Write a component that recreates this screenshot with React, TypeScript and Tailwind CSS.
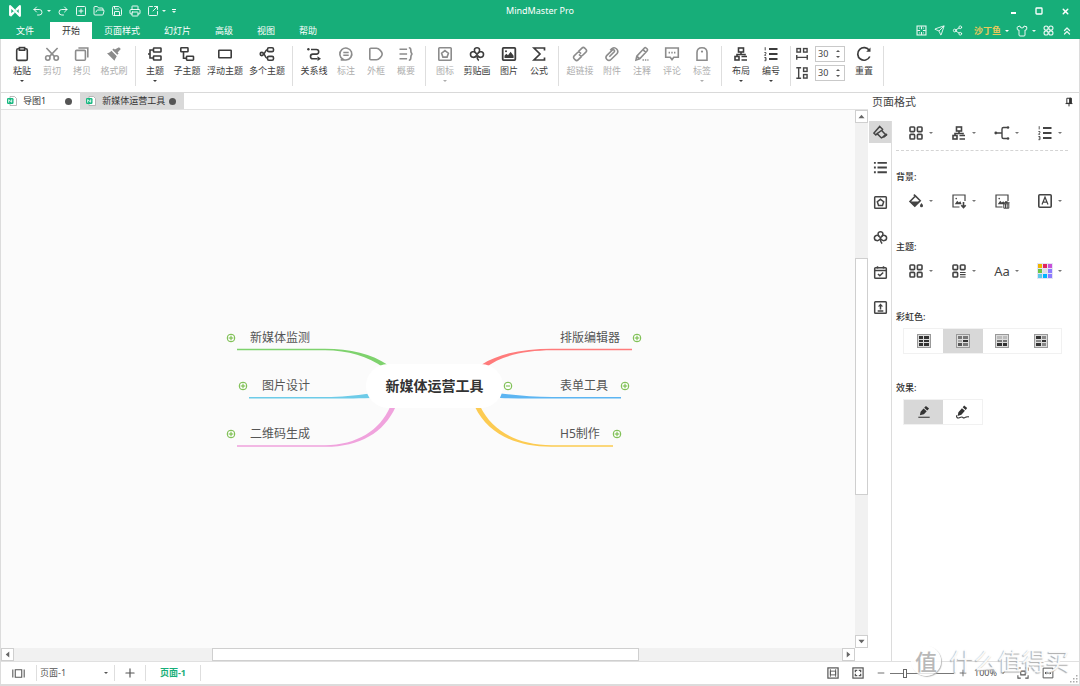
import { useState, type ReactNode } from "react"
import {
  ChevronsUp,
  FolderOpen,
  Minus,
  Plus,
  Printer,
  Redo2,
  Save,
  Send,
  Share2,
  Shirt,
  Square,
  SquareArrowOutUpRight,
  SquarePlus,
  Undo2,
  X,
} from "lucide-react"
import clsx from "clsx"

/* ---------- icons, all on a 16x16 grid ---------- */

const tree = (
  <>
    <rect x="5.5" y="2" width="5" height="4" />
    <path d="M8 6v2.5M4 10.5v-2h8v1" />
    <rect x="2" y="10.5" width="4" height="3.5" />
    <path d="M8.5 10.5H14M8.5 14H14" />
  </>
)

const numbered = (
  <>
    <path d="M6 3h8.5M6 8h8.5M6 13h8.5" strokeWidth="2" />
    <path d="M2.2 1.2v3.2M1.4 6.5h1.5v1.3L1.5 9.3h1.6M1.4 11.5h1.6v3.2H1.4M1.8 13h1.2" strokeWidth="0.9" />
  </>
)

const clover = (
  <>
    <path d="M7 7.2C4.6 5.6 4.8 1.8 8 1.8s3.400 3.800 1 5.400" />
    <path d="M7 7.200C5.200 4.600 1.300 5.600 1.500 8.700s4.500 3.600 6 .8" />
    <path d="M9 7.200c1.800-2.600 5.700-1.600 5.500 1.500s-4.500 3.600-6 .8" />
    <path d="M8 8v2.500c0 2 .5 3 1.800 4M7 7.200l1 1.200 1-1.200" />
  </>
)

const badge = (
  <>
    <rect x="1.8" y="1.8" width="12.4" height="12.4" rx="0.8" />
    <path d="M8 4.6l3.4 2.6-1.3 3.9H5.9L4.6 7.2z" />
  </>
)

const boxes = (
  <>
    <rect x="2" y="2" width="4.6" height="4.6" rx="0.8" />
    <rect x="9.4" y="2" width="4.6" height="4.6" rx="0.8" />
    <rect x="2" y="9.4" width="4.6" height="4.6" rx="0.8" />
    <rect x="9.4" y="9.4" width="4.6" height="4.6" rx="0.8" />
  </>
)

const picture = (
  <>
    <path d="M14 8V2H2v12h6.5" strokeWidth="1.2" />
    <path d="M3.8 11.2l2.4-3.4 1.6 1.8 1.6-1.4 1.2 3z" fill="currentColor" stroke="none" />
    <circle cx="5.2" cy="5.6" r="0.8" fill="currentColor" stroke="none" />
  </>
)

const ICONS: Record<string, ReactNode> = {
  paste: (
    <>
      <rect x="2.7" y="2.8" width="10.6" height="11.6" rx="1.4" />
      <rect x="5.4" y="1.6" width="5.2" height="2.6" fill="white" />
    </>
  ),
  cut: (
    <>
      <circle cx="3.8" cy="12" r="2.2" />
      <circle cx="12.2" cy="12" r="2.2" />
      <path d="M2.4 2l8.2 8.6M13.6 2L5.4 10.6" />
    </>
  ),
  copy: (
    <>
      <rect x="1.6" y="4.4" width="9.8" height="9.8" rx="1" />
      <path d="M4.4 2h9.4v9.6" />
    </>
  ),
  brush: (
    <g fill="currentColor" stroke="none">
      <path d="M13 1.2l1.8 1.8-3.2 3.4 1 1-1.3 1.4-5-5 1.4-1.3 1.2 1.1z" />
      <path d="M5.4 4.8l5.4 5.4c-1 1.4-1.8 2.8-2.3 4.6L1 7.3c1.8-.3 3.2-1 4.4-2.5z" />
    </g>
  ),
  topic: (
    <>
      <rect x="6.5" y="2" width="7.5" height="4" rx="0.6" />
      <rect x="6.5" y="10" width="7.5" height="4" rx="0.6" />
      <path d="M6.5 4H3v8h3.5M3 8H1" />
    </>
  ),
  subtopic: (
    <>
      <rect x="1.8" y="1.8" width="7.2" height="4" rx="0.6" />
      <rect x="7.5" y="10.2" width="7" height="4" rx="0.6" />
      <path d="M4.5 5.8v6.4h3" />
    </>
  ),
  floating: <rect x="1.8" y="4.2" width="12.4" height="7.6" rx="0.5" />,
  multi: (
    <>
      <circle cx="2.8" cy="8" r="1.6" />
      <rect x="8.5" y="1.8" width="6" height="3.8" rx="1.4" />
      <rect x="8.5" y="10.4" width="6" height="3.8" rx="1.4" />
      <path d="M8.500 3.700C5.800 3.700 6.500 8 4.400 8M8.500 12.300C5.800 12.300 6.500 8 4.400 8" />
    </>
  ),
  relation: (
    <>
      <path d="M5 3.500h5.400a2.300 2.300 0 0 1 0 4.600H6.800a2.300 2.300 0 0 0 0 4.600h4.700" />
      <circle cx="2.4" cy="3.2" r="1.2" fill="currentColor" stroke="none" />
      <path d="M11.500 10.300l3.500 2.400-3.500 2.400z" fill="currentColor" stroke="none" />
    </>
  ),
  callout: (
    <>
      <path d="M5 13.300a6 6 0 1 1 3 .7H2.800z" />
      <path d="M5.300 6.500h5.400M5.300 9.300h5.400" />
    </>
  ),
  boundary: <path d="M2.800 2.200h5.700c2.500 0 5.700 3.800 5.700 5.800s-3.200 5.800-5.700 5.800H2.800a1 1 0 0 1-1-1V3.200a1 1 0 0 1 1-1z" />,
  summary: (
    <path d="M1.500 3.200h7.600M1.500 8h7.600M1.500 12.800h7.600M10.800 1.800c2 0 2 .8 2 2.200 0 2 0 3.600 1.600 4-1.600.4-1.600 2-1.600 4 0 1.400 0 2.200-2 2.200" />
  ),
  badge,
  clover,
  image: (
    <>
      <rect x="1.7" y="1.9" width="12.6" height="12.2" rx="0.8" strokeWidth="1.8" />
      <path d="M3.500 12V9.800l1.800-2 1.700 1.500 2.600-3.500 3 4V12z" fill="currentColor" stroke="none" />
      <circle cx="5" cy="5.2" r="1" fill="currentColor" stroke="none" />
    </>
  ),
  sigma: <path d="M13.500 4.500V2H3l6 6-6 6h10.500v-2.500" strokeWidth="1.7" />,
  link: (
    <g transform="rotate(-45 8 8)">
      <path d="M7.500 10.800H2.500a2 2 0 0 1-2-2V7.200a2 2 0 0 1 2-2h4.500a2 2 0 0 1 2 2v1.300" />
      <path d="M8.500 5.200h5a2 2 0 0 1 2 2v1.600a2 2 0 0 1-2 2H9a2 2 0 0 1-2-2V7.500" />
    </g>
  ),
  clip: (
    <path d="M5.300 10.700l5-5a1.300 1.300 0 0 0-1.800-1.800l-5.600 5.500a2.900 2.900 0 0 0 4.100 4.100l5.900-5.800a3.600 3.600 0 0 0-5-5.100L6.200 4.300" />
  ),
  note: (
    <>
      <path d="M2 14l.8-3.800L10.400 2a1.200 1.200 0 0 1 1.700 0l1.100 1a1.200 1.200 0 0 1 0 1.700L5.700 12.800zM9 3.600l2.800 2.800M2.800 10.200l2.900 2.600" />
      <path d="M8.500 14h6" strokeDasharray="1.4 1" />
    </>
  ),
  comment: (
    <>
      <path d="M1.700 2h12.600v9.200h-4.500L8 13.600l-1.800-2.400H1.700z" />
      <path d="M4.600 6.600h1.400M7.300 6.600h1.400M10 6.600h1.400" />
    </>
  ),
  tag: (
    <>
      <path d="M3 14.200V6.500C3 3.500 5.200 1.700 8 1.700s5 1.800 5 4.800v7.700z" />
      <circle cx="8" cy="5.600" r="1.100" fill="currentColor" stroke="none" />
    </>
  ),
  tree,
  numbered,
  reset: (
    <>
      <path d="M13.800 10.500A6.300 6.300 0 1 1 13.400 4.600" strokeWidth="1.7" />
      <path d="M14.500 1.500v4.300h-4.300z" fill="currentColor" stroke="none" />
    </>
  ),
  spaceX: (
    <>
      <rect x="2.200" y="1.800" width="4" height="4" />
      <rect x="9.800" y="1.800" width="4" height="4" />
      <path d="M2 9v5.500M14 9v5.500M2 11.800h12" />
    </>
  ),
  spaceY: (
    <>
      <path d="M1.500 2h5.500M1.500 14h5.500M4.200 2v12" />
      <rect x="9.800" y="2.200" width="4" height="4" />
      <rect x="9.800" y="9.800" width="4" height="4" />
    </>
  ),
  boxes,
  boxesList: (
    <>
      <rect x="2" y="2" width="4.600" height="4.600" rx="0.800" />
      <rect x="9.400" y="2" width="4.600" height="4.600" rx="0.800" />
      <rect x="2" y="9.400" width="4.600" height="4.600" rx="0.800" />
      <path d="M9 9.500h5.600M9 11.700h5.600M9 14h5.600" strokeWidth="1.200" />
    </>
  ),
  branch: (
    <>
      <path d="M3 8h5M13 2.500h-3.500a1.500 1.500 0 0 0-1.500 1.500v8a1.500 1.500 0 0 0 1.500 1.500H13" strokeWidth="1.400" />
      <g fill="currentColor" stroke="none">
        <circle cx="1.800" cy="8" r="1.400" />
        <circle cx="14" cy="2.500" r="1.300" />
        <circle cx="14" cy="13.500" r="1.300" />
      </g>
    </>
  ),
  bucket: (
    <>
      <path d="M7.400 3L2 8.400l4.800 4.800 5.400-5.400zM5.800 1.600l1.600 1.400" />
      <path d="M2 8.400h9.800l-5 5z" fill="currentColor" stroke="none" />
      <path d="M13.500 10c1 1.400 1.500 2 1.500 2.800a1.500 1.500 0 0 1-3 0c0-.8.500-1.400 1.500-2.800z" fill="currentColor" stroke="none" />
    </>
  ),
  pictureDown: (
    <>
      {picture}
      <path d="M12.500 9v5M10.300 12.200l2.200 2.400 2.200-2.400" strokeWidth="1.600" />
    </>
  ),
  pictureTrash: (
    <>
      {picture}
      <path d="M9 9.800h6.600M11 8.800h2.600" strokeWidth="1.300" />
      <path d="M9.800 10.800h5v4.400h-5zM11.500 11v4M13.200 11v4" strokeWidth="1" />
    </>
  ),
  letter: (
    <>
      <rect x="1.800" y="1.800" width="12.400" height="12.400" rx="1" />
      <path d="M5 11.500l3-7.300 3 7.300M6 9.200h4" strokeWidth="1.200" />
    </>
  ),
  painter: (
    <>
      <path d="M7.200 1.500l3 3-1 1.300 4.800 5c-1.600 1.200-3 2-5 3L4.400 9.200 3 10.600 1 8.600z" />
      <path d="M4.400 9.200l5-3.600" />
      <path d="M11 12.800l3.800-3.200" strokeWidth="2.400" />
    </>
  ),
  list: (
    <>
      <path d="M4.800 3h10M4.800 8h10M4.800 13h10" strokeWidth="2" />
      <path d="M1 3h2M1 8h2M1 13h2" strokeWidth="2" />
    </>
  ),
  calendar: (
    <>
      <rect x="1.800" y="2.800" width="12.400" height="11.400" rx="1" />
      <path d="M2 5.800h12M4.800 1.200v2.400M11.200 1.200v2.400M5.300 9.500l2 2 3.600-3.600" />
    </>
  ),
  upload: (
    <>
      <rect x="1.800" y="1.800" width="12.400" height="12.400" rx="0.800" />
      <path d="M5 11.600h6M8 10V6" />
      <path d="M8 3.600l2.800 3.400H5.200z" fill="currentColor" stroke="none" />
    </>
  ),
  marker: (
    <>
      <path d="M10.200 1l3.600 3-2 2.200-3.600-3zM7.500 4l3.600 3-3.200 3.500-4.600 1.200.8-4z" fill="currentColor" stroke="none" />
      <path d="M1.500 14h13" strokeWidth="1.200" />
    </>
  ),
  scribble: (
    <>
      <path d="M9.800.5l3.200 2.800-1.600 1.900-3.200-2.800zM7.400 3.400l3.200 2.800-3.800 4.200-4 1.400.8-4z" fill="currentColor" stroke="none" />
      <path d="M2 11c-1 2 .5 3.400 2.500 2.600s3-1.400 3.800-.4 1.800.8 2.600 0 2.400-.6 4-.6" strokeWidth="1.200" />
    </>
  ),
  pages: <path d="M1 3v10M15 3v10M4 3.500h8v9H4z" strokeWidth="1.300" />,
  fitPage: (
    <>
      <rect x="1.200" y="1.200" width="13.600" height="13.600" />
      <path d="M4.500 3v10M11.500 3v10M4.500 5.500h7v5h-7z" strokeWidth="1.200" />
    </>
  ),
  expand: (
    <>
      <rect x="1.200" y="1.200" width="13.600" height="13.600" />
      <path d="M4.500 7V4.500H7M9 4.500h2.500V7M11.500 9v2.500H9M7 11.500H4.500V9" strokeWidth="1.800" />
    </>
  ),
  focus: <path d="M1.200 5V1.200H5M11 1.200h3.800V5M14.800 11v3.800H11M5 14.800H1.200V11M5 5.500h6v5H5z" strokeWidth="1.400" />,
  fitWidth: (
    <path d="M1.500 14.500v-13h13v13zM4 8h8M5.500 6.500L4 8l1.500 1.500M10.500 6.500L12 8l-1.500 1.500" strokeWidth="1.300" />
  ),
  pin: (
    <>
      <path d="M4.500 2h7v8h-7zM2.500 10.500h11M8 10.500V15" />
      <path d="M9 2h2.500v8H9z" fill="currentColor" />
    </>
  ),
  logo: <path d="M2.500 13.500v-11l11 11v-11L9.200 7M7 9.200l-4.500 4.300" strokeWidth="2.600" strokeLinejoin="round" />,
  fullscreen: (
    <>
      <rect x="1.500" y="1.500" width="13" height="13" />
      <path d="M8 2v4M8 10v4M2 8h4M10 8h4" />
      <path d="M4.500 4.500h1M10.500 4.500h1M4.500 11.500h1M10.500 11.500h1" />
    </>
  ),
  rings: (
    <>
      <circle cx="4.500" cy="4.500" r="3" />
      <circle cx="11.500" cy="4.500" r="3" />
      <circle cx="4.500" cy="11.500" r="3" />
      <circle cx="11.500" cy="11.500" r="3" />
    </>
  ),
}

function Icon({ name, className = "size-4" }: { name: string; className?: string }) {
  return (
    <svg viewBox="0 0 16 16" fill="none" stroke="currentColor" strokeWidth="1.6" className={clsx("shrink-0", className)} aria-hidden>
      {ICONS[name]}
    </svg>
  )
}

function Caret({ className }: { className?: string }) {
  return (
    <svg viewBox="0 0 4 2" className={clsx("h-0.5 w-1 shrink-0", className)} fill="currentColor" aria-hidden>
      <path d="M0 0h4L2 2z" />
    </svg>
  )
}

/* ---------- title bar and menu ---------- */

const MENU = ["页面样式", "幻灯片", "高级", "视图", "帮助"]

function Header() {
  return (
    <header className="bg-[#17ae79] text-white">
      <div className="grid h-[22px] grid-cols-[1fr_auto_1fr] items-center">
        <div className="flex items-center gap-[6px] pl-2 text-white/90">
          <Icon name="logo" className="size-[14px] text-white" />
          <div className="ml-1 flex items-center gap-[3px]">
            <button aria-label="撤销"><Undo2 className="size-3" /></button>
            <Caret />
          </div>
          <button aria-label="重做"><Redo2 className="size-3" /></button>
          <button aria-label="新建"><SquarePlus className="size-3" /></button>
          <button aria-label="打开"><FolderOpen className="size-3" /></button>
          <button aria-label="保存"><Save className="size-3" /></button>
          <button aria-label="打印"><Printer className="size-3" /></button>
          <div className="flex items-center gap-[3px]">
            <button aria-label="导出"><SquareArrowOutUpRight className="size-3" /></button>
            <Caret />
          </div>
          <button aria-label="更多" className="flex flex-col items-center gap-px">
            <span className="h-px w-1 bg-white" />
            <Caret />
          </button>
        </div>
        <h1 className="text-[9px] leading-3">MindMaster Pro</h1>
        <div className="flex justify-end pr-0.5">
          <button aria-label="最小化" className="grid h-5 w-[26px] place-items-center pt-1">
            <span className="h-0.5 w-[5px] bg-white" />
          </button>
          <button aria-label="最大化" className="grid h-5 w-[26px] place-items-center">
            <Square className="size-2" strokeWidth={4} />
          </button>
          <button aria-label="关闭" className="grid h-5 w-[26px] place-items-center">
            <X className="size-[9px]" strokeWidth={4} />
          </button>
        </div>
      </div>
      <div className="flex h-[17px] justify-between">
        <nav className="flex text-[9px] leading-[17px]">
          <button className="w-[50px]">文件</button>
          <button className="bg-white px-3 text-[#333]">开始</button>
          {MENU.map((m) => (
            <button key={m} className="px-3">{m}</button>
          ))}
        </nav>
        <div className="flex items-center gap-[7px] pr-[7px] text-white/90">
          <button aria-label="全屏"><Icon name="fullscreen" className="size-[11px]" /></button>
          <button aria-label="发送"><Send className="size-[11px]" /></button>
          <button aria-label="分享"><Share2 className="size-[11px]" /></button>
          <button className="ml-1 flex items-center gap-1 text-[9px] leading-3 font-bold text-[#e9c95c]">
            沙丁鱼
            <Caret className="text-white" />
          </button>
          <button aria-label="主题皮肤" className="flex items-center gap-1">
            <Shirt className="size-3" />
            <Caret />
          </button>
          <button aria-label="应用"><Icon name="rings" className="size-[11px]" /></button>
          <button aria-label="收起功能区"><ChevronsUp className="size-3" strokeWidth={2.5} /></button>
        </div>
      </div>
    </header>
  )
}

/* ---------- ribbon ---------- */

type Tool = { icon: string; label: string; off?: boolean; menu?: boolean }

const GROUPS: Tool[][] = [
  [
    { icon: "paste", label: "粘贴", menu: true },
    { icon: "cut", label: "剪切", off: true },
    { icon: "copy", label: "拷贝", off: true },
    { icon: "brush", label: "格式刷", off: true },
  ],
  [
    { icon: "topic", label: "主题", menu: true },
    { icon: "subtopic", label: "子主题" },
    { icon: "floating", label: "浮动主题" },
    { icon: "multi", label: "多个主题" },
  ],
  [
    { icon: "relation", label: "关系线" },
    { icon: "callout", label: "标注", off: true },
    { icon: "boundary", label: "外框", off: true },
    { icon: "summary", label: "概要", off: true },
  ],
  [
    { icon: "badge", label: "图标", off: true, menu: true },
    { icon: "clover", label: "剪贴画" },
    { icon: "image", label: "图片" },
    { icon: "sigma", label: "公式" },
  ],
  [
    { icon: "link", label: "超链接", off: true },
    { icon: "clip", label: "附件", off: true },
    { icon: "note", label: "注释", off: true },
    { icon: "comment", label: "评论", off: true },
    { icon: "tag", label: "标签", off: true, menu: true },
  ],
  [
    { icon: "tree", label: "布局", menu: true },
    { icon: "numbered", label: "编号", menu: true },
  ],
]

const TOOL_WIDTH: Record<number, string> = { 2: "w-[30px]", 3: "w-[34px]", 4: "w-[42px]" }

function ToolButton({ icon, label, off, menu }: Tool) {
  return (
    <button
      disabled={off}
      className={clsx("flex flex-col items-center", TOOL_WIDTH[label.length], off ? "text-[#adadad]" : "text-[#3c3c3c]")}
    >
      <Icon name={icon} className={clsx("size-4", off && "text-[#8c8c8c]")} />
      <span className="mt-[3px] text-[9px] leading-3">{label}</span>
      {menu && <Caret className="mt-[3px]" />}
    </button>
  )
}

function Divider({ className = "h-10" }: { className?: string }) {
  return <span className={clsx("w-px shrink-0 bg-[#dedede]", className)} />
}

function Spacing({ icon, label }: { icon: string; label: string }) {
  const [value, setValue] = useState(30)
  return (
    <div className="flex items-center gap-[6px]">
      <Icon name={icon} className="size-[14px] text-[#444]" />
      <div className="flex h-4 w-[30px] items-center justify-between border border-[#c9c9c9] pr-1 pl-0.5">
        <input
          aria-label={label}
          value={value}
          onChange={(e) => setValue(Number(e.target.value) || 0)}
          className="w-4 text-[9px] leading-3 text-[#444] outline-none"
        />
        <div className="flex flex-col gap-1 text-[#555]">
          <button aria-label={label + "增加"} onClick={() => setValue(value + 1)}><Caret className="block rotate-180" /></button>
          <button aria-label={label + "减少"} onClick={() => setValue(value - 1)}><Caret className="block" /></button>
        </div>
      </div>
    </div>
  )
}

function Ribbon() {
  return (
    <div className="flex h-[54px] shrink-0 gap-1 border-b border-[#d9d9d9] pt-[7px] pl-[6px]">
      {GROUPS.map((group, i) => (
        <div key={i} className="flex gap-1">
          <div className="flex items-start">
            {group.map((tool) => (
              <ToolButton key={tool.label} {...tool} />
            ))}
          </div>
          <Divider />
        </div>
      ))}
      <div className="flex flex-col gap-[3px]">
        <Spacing icon="spaceX" label="水平间距" />
        <Spacing icon="spaceY" label="垂直间距" />
      </div>
      <div className="flex items-start gap-1">
        <ToolButton icon="reset" label="重置" />
        <Divider />
      </div>
    </div>
  )
}

/* ---------- document tabs and canvas ---------- */

function DocTab({ name, active }: { name: string; active?: boolean }) {
  return (
    <button className={clsx("flex items-center pr-2 pl-[6px] text-[9px] leading-3 text-[#333]", active && "bg-[#d9d9d9]")}>
      <svg viewBox="0 0 10 10" className="mr-[6px] size-[10px]" aria-hidden>
        <path d="M3 .5h4.500l2 2v7H3z" fill="#fff" stroke="#a8a8a8" strokeWidth="0.8" />
        <rect x="0" y="2" width="6.5" height="6" rx="1.2" fill="#17b880" />
        <path d="M1.700 6.600V3.600l3 2.600V3.400" fill="none" stroke="#fff" strokeWidth="0.9" />
      </svg>
      {name}
      <span className={clsx("size-[7px] rounded-full bg-[#555]", active ? "ml-1" : "ml-[19px]")} />
    </button>
  )
}

const NODES = [
  { text: "新媒体监测", place: "top-[21px] left-[14px]", side: "left" },
  { text: "图片设计", place: "top-[69px] left-[26px]", side: "left" },
  { text: "二维码生成", place: "top-[117px] left-[14px]", side: "left" },
  { text: "排版编辑器", place: "top-[21px] left-[348px]", side: "right" },
  { text: "表单工具", place: "top-[69px] left-[348px]", side: "right" },
  { text: "H5制作", place: "top-[117px] left-[348px]", side: "right" },
]

function Toggle({ open }: { open?: boolean }) {
  return (
    <button aria-label={open ? "收起" : "展开"} className="block shrink-0">
      <svg viewBox="0 0 10 10" className="size-[10px]" fill="none" stroke="#6fb83f" strokeWidth="1" aria-hidden>
        <circle cx="5" cy="5" r="3.8" fill="#fff" />
        <path d={open ? "M2.800 5h4.400" : "M2.600 5h4.800M5 2.600v4.800"} />
      </svg>
    </button>
  )
}

function MindMap() {
  return (
    <div className="relative h-[142px] w-[432px]">
      <svg viewBox="0 0 432 142" className="absolute inset-0 size-full" aria-hidden>
        <path d="M25 40.700H113C138 40.700 160 46 176 57L172 60C156 48 136 42.500 113 42.300H25z" fill="#7ed26d" />
        <path d="M37 89H113C130 89 142 87.500 158 85.500L159 90C142 90.500 130 90.600 113 90.600H37z" fill="#6dcbe8" />
        <path d="M25 137.200H113C145 137 168 122 178 99L183.500 99C172 125 147 139 113 138.800H25z" fill="#f0a3dd" />
        <path d="M420 40.700H340C312 40.700 288 45 269 57L273 60C290 47 314 42.500 340 42.300H420z" fill="#ff7b7b" />
        <path d="M409 89H340C322 89 304 87.500 289 85.500L288 90C304 90.500 322 90.600 340 90.600H409z" fill="#5cb5f2" />
        <path d="M401 137.200H340C304 137 280 122 268.500 99L263 99C276 126 304 139 340 138.800H401z" fill="#fccb52" />
      </svg>
      <div className="absolute top-14 left-[154px] grid h-11 w-[137px] place-items-center rounded-full bg-white text-sm font-bold whitespace-nowrap text-[#333]">
        新媒体运营工具
      </div>
      <div className="absolute top-[73px] left-[291px]">
        <Toggle open />
      </div>
      {NODES.map((n) => (
        <div
          key={n.text}
          className={clsx(
            "absolute flex items-center text-xs leading-[18px] whitespace-nowrap text-[#555]",
            n.place,
            n.side === "left" ? "gap-[14px]" : "flex-row-reverse gap-[12px]"
          )}
        >
          <Toggle />
          {n.text}
        </div>
      ))}
    </div>
  )
}

const ARROWS = {
  up: "M.5 6h7L4 2z",
  down: "M.5 2h7L4 6z",
  left: "M6 .5v7L2 4z",
  right: "M2 .5v7l4-3.5z",
}

function ScrollArrow({ dir }: { dir: keyof typeof ARROWS }) {
  return (
    <button aria-label={dir} className="grid size-[13px] shrink-0 place-items-center border border-[#cfcfcf] bg-white">
      <svg viewBox="0 0 8 8" className="size-[7px]" fill="#666" aria-hidden>
        <path d={ARROWS[dir]} />
      </svg>
    </button>
  )
}

function Workspace() {
  return (
    <main className="flex min-w-0 flex-1 flex-col">
      <div className="flex h-[17px] shrink-0 border-b border-[#e2e2e2]">
        <DocTab name="导图1" />
        <DocTab name="新媒体运营工具" active />
      </div>
      <div className="flex min-h-0 flex-1">
        <div className="grid flex-1 place-items-center overflow-hidden bg-[#fbfbfb]">
          <MindMap />
        </div>
        <div className="flex w-[13px] flex-col bg-[#f1f1f1]">
          <ScrollArrow dir="up" />
          <div className="flex-[136]" />
          <div className="flex-[237] border border-[#cfcfcf] bg-white" />
          <div className="flex-[141]" />
          <ScrollArrow dir="down" />
        </div>
      </div>
      <div className="mr-[13px] flex h-[13px] shrink-0 bg-[#f1f1f1]">
        <ScrollArrow dir="left" />
        <div className="flex-[199]" />
        <div className="flex-[426] border border-[#cfcfcf] bg-white" />
        <div className="flex-[204]" />
        <ScrollArrow dir="right" />
      </div>
    </main>
  )
}

/* ---------- page format panel ---------- */

const RAIL = ["painter", "list", "badge", "clover", "calendar", "upload"]
const SWATCHES = ["#f0b400", "#e0245e", "#c84fd8", "#6cc644", "#e0e0e0", "#8d7bff", "#5fcbe8", "#00b4ff", "#8d7bff"]
const RAINBOW = [
  ["#333", "#333", "#333", "#333", "#333", "#333"],
  ["#777", "#777", "#aaa", "#333", "#555", "#777"],
  ["#bbb", "#bbb", "#777", "#777", "#333", "#333"],
  ["#333", "#888", "#888", "#333", "#333", "#888"],
]

function PanelButton({ icon, label, menu = true, children }: { icon?: string; label: string; menu?: boolean; children?: ReactNode }) {
  return (
    <button aria-label={label} className="flex h-4 items-center gap-[5px] text-[#444]">
      {icon ? <Icon name={icon} /> : children}
      {menu && <Caret className="text-[#777]" />}
    </button>
  )
}

function PanelRow({ children }: { children: ReactNode }) {
  return <div className="grid grid-cols-[repeat(4,43px)] pl-3">{children}</div>
}

function Section({ title, className, children }: { title: string; className?: string; children: ReactNode }) {
  return (
    <section className={className}>
      <h3 className="text-[9px] leading-3 font-medium text-[#333]">{title}</h3>
      {children}
    </section>
  )
}

function FormatPanel() {
  return (
    <aside className="flex w-[211px] shrink-0 flex-col">
      <div className="flex h-[18px] items-center justify-between pr-[5px] pl-1">
        <h2 className="text-[11px] leading-4 text-[#444]">页面格式</h2>
        <button aria-label="固定"><Icon name="pin" className="size-[10px] text-[#333]" /></button>
      </div>
      <div className="flex flex-1 pt-[10px]">
        <div className="flex w-6 shrink-0 flex-col gap-[13px] border-r border-[#dcdcdc] pl-px">
          {RAIL.map((name, i) => (
            <button key={name} aria-label={name} className={clsx("grid size-[22px] place-items-center text-[#444]", i === 0 && "bg-[#d8d8d8]")}>
              <Icon name={name} className="size-[15px]" />
            </button>
          ))}
        </div>
        <div className="min-w-0 flex-1 pt-1 pr-[11px] pl-1">
          <PanelRow>
            <PanelButton icon="boxes" label="布局" />
            <PanelButton icon="tree" label="结构" />
            <PanelButton icon="branch" label="连线" />
            <PanelButton icon="numbered" label="编号" />
          </PanelRow>
          <div className="mt-[9px] border-t border-dashed border-[#d4d4d4]" />
          <Section title="背景:" className="mt-5">
            <div className="mt-[10px]">
              <PanelRow>
                <PanelButton icon="bucket" label="填充" />
                <PanelButton icon="pictureDown" label="插入图片" />
                <PanelButton icon="pictureTrash" label="删除图片" menu={false} />
                <PanelButton icon="letter" label="水印" />
              </PanelRow>
            </div>
          </Section>
          <Section title="主题:" className="mt-8">
            <div className="mt-[10px]">
              <PanelRow>
                <PanelButton icon="boxes" label="主题" />
                <PanelButton icon="boxesList" label="主题颜色" />
                <PanelButton label="字体">
                  <span className="w-4 text-[13px] leading-4">Aa</span>
                </PanelButton>
                <PanelButton label="配色">
                  <span className="grid size-4 grid-cols-3 gap-px bg-[#e4e4f4] p-px">
                    {SWATCHES.map((c, i) => (
                      <span key={i} style={{ backgroundColor: c }} />
                    ))}
                  </span>
                </PanelButton>
              </PanelRow>
            </div>
          </Section>
          <Section title="彩虹色:" className="mt-8">
            <div className="mt-[5px] mr-[6px] ml-[7px] grid h-[26px] grid-cols-4 border border-[#f1f1f1]">
              {RAINBOW.map((cells, i) => (
                <button key={i} aria-label={"彩虹色" + (i + 1)} className={clsx("grid place-items-center", i === 1 && "bg-[#d8d8d8]")}>
                  <span className="grid size-[14px] grid-cols-2 gap-px border border-[#999] bg-[#ddd] p-px">
                    {cells.map((c, j) => (
                      <span key={j} style={{ backgroundColor: c }} />
                    ))}
                  </span>
                </button>
              ))}
            </div>
          </Section>
          <Section title="效果:" className="mt-[28px]">
            <div className="mt-[5px] ml-[7px] flex h-[26px] w-20 border border-[#f1f1f1]">
              <button aria-label="直线" className="grid flex-1 place-items-center bg-[#d8d8d8] text-[#333]"><Icon name="marker" className="size-[14px]" /></button>
              <button aria-label="手绘" className="grid flex-1 place-items-center text-[#333]"><Icon name="scribble" className="size-[15px]" /></button>
            </div>
          </Section>
        </div>
      </div>
    </aside>
  )
}

/* ---------- status bar ---------- */

function StatusBar() {
  return (
    <footer className="flex h-[23px] shrink-0 items-center justify-between border-t border-[#e0e0e0] text-[9px] leading-3 text-[#555]">
      <div className="flex h-full items-center">
        <button aria-label="页面视图" className="grid w-[35px] place-items-center"><Icon name="pages" className="size-[13px]" /></button>
        <Divider className="h-4" />
        <label className="relative flex w-[77px] items-center">
          <select aria-label="页面" className="w-full appearance-none pl-[3px] outline-none">
            <option>页面-1</option>
          </select>
          <Caret className="pointer-events-none absolute right-[6px]" />
        </label>
        <Divider className="h-4" />
        <button aria-label="新建页面" className="grid w-[30px] place-items-center"><Plus className="size-[14px]" /></button>
        <Divider className="h-4" />
        <button className="w-[54px] font-bold text-[#17ae79]">页面-1</button>
        <Divider className="h-4" />
      </div>
      <div className="flex h-full items-center">
        <div className="flex items-center gap-[13px]">
          <button aria-label="适合页面"><Icon name="fitPage" className="block size-3" /></button>
          <button aria-label="全屏显示"><Icon name="expand" className="block size-3" /></button>
        </div>
        <button aria-label="缩小" className="ml-3"><Minus className="size-[10px]" /></button>
        <input
          type="range"
          aria-label="缩放"
          defaultValue={21}
          className="mx-1 h-3 w-16 appearance-none bg-transparent [&::-webkit-slider-runnable-track]:h-px [&::-webkit-slider-runnable-track]:bg-[#777] [&::-webkit-slider-thumb]:-mt-1 [&::-webkit-slider-thumb]:h-[9px] [&::-webkit-slider-thumb]:w-1 [&::-webkit-slider-thumb]:appearance-none [&::-webkit-slider-thumb]:border [&::-webkit-slider-thumb]:border-[#666] [&::-webkit-slider-thumb]:bg-white"
        />
        <button aria-label="放大"><Plus className="size-[10px]" /></button>
        <button className="ml-[6px] flex items-center gap-1">
          100%
          <Caret />
        </button>
        <div className="ml-3 flex items-center gap-[13px]">
          <button aria-label="聚焦"><Icon name="focus" className="block size-3" /></button>
          <button aria-label="适合宽度"><Icon name="fitWidth" className="block size-3" /></button>
        </div>
        <svg viewBox="0 0 9 9" className="ml-4 size-[9px] self-end" fill="#aaa" aria-hidden>
          <path d="M6 0h1.500v1.500H6zM6 3h1.500v1.500H6zM3 3h1.500v1.500H3zM6 6h1.500v1.500H6zM3 6h1.500v1.500H3zM0 6h1.500v1.500H0z" />
        </svg>
      </div>
    </footer>
  )
}

function Watermark() {
  return (
    <div className="pointer-events-none absolute right-[10px] bottom-[10px] flex items-center gap-[9px] text-2xl leading-[30px] text-white/90 [text-shadow:-1px_1px_1px_#aaa]">
      <span className="grid size-[30px] place-items-center rounded-full bg-white/80 text-[22px] font-medium text-[#b8b8b8] shadow-[1px_1px_1px_#bbb] [text-shadow:none]">值</span>
      什么值得买
    </div>
  )
}

export default function App() {
  return (
    <div className="relative flex h-screen flex-col overflow-hidden bg-white font-['Noto_Sans','Noto_Sans_CJK_SC',sans-serif]">
      <Header />
      <div className="flex min-h-0 flex-1 flex-col border-x border-b-2 border-[#dcdcdc]">
        <Ribbon />
        <div className="flex min-h-0 flex-1">
          <Workspace />
          <FormatPanel />
        </div>
        <StatusBar />
      </div>
      <Watermark />
    </div>
  )
}
